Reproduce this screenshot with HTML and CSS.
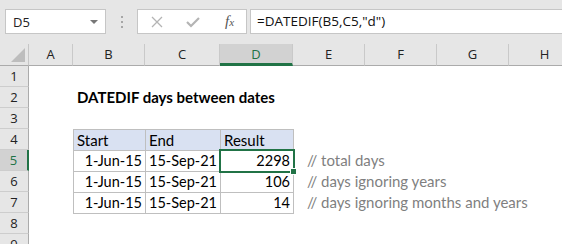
FILE: index.html
```html
<!DOCTYPE html>
<html lang="en">
<head>
    <meta charset="UTF-8">
    <title>DATEDIF days between dates</title>
    <link rel="stylesheet" href="styles.css">
</head>
<body>
    <div class="toolbar">
        <div class="namebox">
            <span>D5</span>
            <span class="caret"></span>
        </div>
        <div class="grip"><i></i><i></i><i></i></div>
        <div class="fxbox">
            <svg width="12" height="12" viewBox="0 0 12 12"><path d="M1 1 L11 11 M11 1 L1 11" stroke="#b4b4b4" stroke-width="1.3" fill="none"/></svg>
            <svg width="14" height="12" viewBox="0 0 14 12"><path d="M1 6 L5 10 L13 2" stroke="#b4b4b4" stroke-width="2.2" fill="none"/></svg>
            <span class="fx">f<small>x</small></span>
        </div>
        <div class="formula">=DATEDIF(B5,C5,"d")</div>
    </div>

    <div class="sheet">
        <div class="corner"><span class="tri"></span></div>
        <div class="colhead">A</div>
        <div class="colhead">B</div>
        <div class="colhead">C</div>
        <div class="colhead active">D</div>
        <div class="colhead">E</div>
        <div class="colhead">F</div>
        <div class="colhead">G</div>
        <div class="colhead">H</div>

        <div class="rowhead" style="grid-row: 2">1</div>
        <div class="rowhead" style="grid-row: 3">2</div>
        <div class="rowhead" style="grid-row: 4">3</div>
        <div class="rowhead" style="grid-row: 5">4</div>
        <div class="rowhead active" style="grid-row: 6">5</div>
        <div class="rowhead" style="grid-row: 7">6</div>
        <div class="rowhead" style="grid-row: 8">7</div>
        <div class="rowhead" style="grid-row: 9">8</div>
        <div class="rowhead" style="grid-row: 10">9</div>

        <div class="title">DATEDIF days between dates</div>

        <div class="table">
            <div class="th">Start</div>
            <div class="th">End</div>
            <div class="th">Result</div>

            <div class="td">1-Jun-15</div>
            <div class="td">15-Sep-21</div>
            <div class="td selected">2298</div>

            <div class="td">1-Jun-15</div>
            <div class="td">15-Sep-21</div>
            <div class="td">106</div>

            <div class="td">1-Jun-15</div>
            <div class="td">15-Sep-21</div>
            <div class="td">14</div>
        </div>

        <div class="note" style="grid-row: 6">// total days</div>
        <div class="note" style="grid-row: 7">// days ignoring years</div>
        <div class="note" style="grid-row: 8">// days ignoring months and years</div>
    </div>
</body>
</html>
```

FILE: styles.css
```css
body {
    margin: 0;
    width: 562px;
    height: 244px;
    overflow: hidden;
    background: #ffffff;
    font-family: 'Open Sans', 'Noto Sans', sans-serif;
    color: #000;
}
.toolbar {
    height: 44px;
    background: #e6e6e6;
    display: flex;
    align-items: flex-start;
    padding-top: 9px;
    box-sizing: border-box;
}
.namebox {
    margin-left: 5px;
    width: 101px;
    height: 25px;
    box-sizing: border-box;
    background: #fff;
    border: 1px solid #c6c6c6;
    display: flex;
    align-items: center;
    justify-content: space-between;
    padding: 0 7px 0 7px;
    font-size: 13px;
    color: #222;
}
.caret {
    width: 0;
    height: 0;
    border-left: 4px solid transparent;
    border-right: 4px solid transparent;
    border-top: 4px solid #777;
}
.grip {
    width: 31px;
    height: 25px;
    display: flex;
    flex-direction: column;
    align-items: center;
    justify-content: center;
    gap: 3px;
}
.grip i {
    display: block;
    width: 2px;
    height: 2px;
    background: #a6a6a6;
}
.fxbox {
    width: 110px;
    height: 25px;
    box-sizing: border-box;
    background: #fff;
    border: 1px solid #c6c6c6;
    display: flex;
    align-items: center;
    padding-left: 13px;
    gap: 23px;
}
.fx {
    font-family: 'Liberation Serif', serif;
    font-style: italic;
    font-size: 15px;
    color: #555;
    margin-left: 2px;
}
.fx small {
    font-size: 11px;
}
.formula {
    flex: 1;
    margin-left: 3px;
    height: 25px;
    box-sizing: border-box;
    background: #fff;
    border: 1px solid #c6c6c6;
    border-right: none;
    font-size: 13.5px;
    line-height: 23px;
    padding-left: 6px;
    color: #111;
}
.sheet {
    display: grid;
    grid-template-columns: 29px 44px 72px 75px 73px 72px 72px 72px 72px;
    grid-template-rows: 22px repeat(9, 21px);
}
.corner, .colhead {
    background: #e6e6e6;
    border-bottom: 1px solid #ababab;
    box-sizing: border-box;
    font-size: 13px;
    text-align: center;
    line-height: 21px;
    color: #222;
}
.corner {
    border-right: 1px solid #c6c6c6;
    position: relative;
}
.tri {
    position: absolute;
    right: 3px;
    bottom: 3px;
    width: 0;
    height: 0;
    border-left: 14px solid transparent;
    border-bottom: 14px solid #bdbdbd;
}
.colhead {
    border-right: 1px solid #c9c9c9;
}
.colhead.active {
    background: #d2d2d2;
    color: #217346;
    border-bottom: 3px solid #217346;
    line-height: 20px;
}
.rowhead {
    grid-column: 1;
    background: #e6e6e6;
    border-bottom: 1px solid #cdcdcd;
    border-right: 1px solid #ababab;
    box-sizing: border-box;
    font-size: 13px;
    text-align: center;
    line-height: 20px;
    color: #222;
}
.rowhead.active {
    background: #d2d2d2;
    color: #217346;
    border-right: 2px solid #217346;
}
.title {
    grid-column: 3 / 7;
    grid-row: 3;
    font-family: 'Lato', sans-serif;
    font-weight: bold;
    font-size: 15px;
    line-height: 21px;
    padding-left: 4px;
}
.table {
    grid-column: 3 / 6;
    grid-row: 5 / 9;
    width: 221px;
    height: 85px;
    display: grid;
    grid-template-columns: 71px 74px 72px;
    grid-auto-rows: 20px;
    gap: 1px;
    padding: 1px;
    box-sizing: border-box;
    background: #bfbfbf;
    font-family: 'Lato', sans-serif;
    font-size: 14.5px;
}
.th, .td {
    background: #fff;
    line-height: 20px;
    white-space: nowrap;
}
.th {
    background: #d9e1f2;
    padding-left: 3px;
    font-size: 15px;
}
.td {
    text-align: right;
    padding-right: 3px;
}
.td.selected {
    position: relative;
}
.td.selected::after {
    content: "";
    position: absolute;
    left: -2px;
    top: -2px;
    right: -2px;
    bottom: -2px;
    border: 2px solid #217346;
}
.td.selected::before {
    content: "";
    position: absolute;
    right: -4px;
    bottom: -4px;
    width: 5px;
    height: 5px;
    background: #217346;
    border: 1px solid #fff;
    z-index: 2;
}
.note {
    grid-column: 6 / 10;
    font-family: 'Lato', sans-serif;
    font-size: 15px;
    line-height: 21px;
    color: #7f7f7f;
    padding-left: 14px;
    white-space: nowrap;
}
```
